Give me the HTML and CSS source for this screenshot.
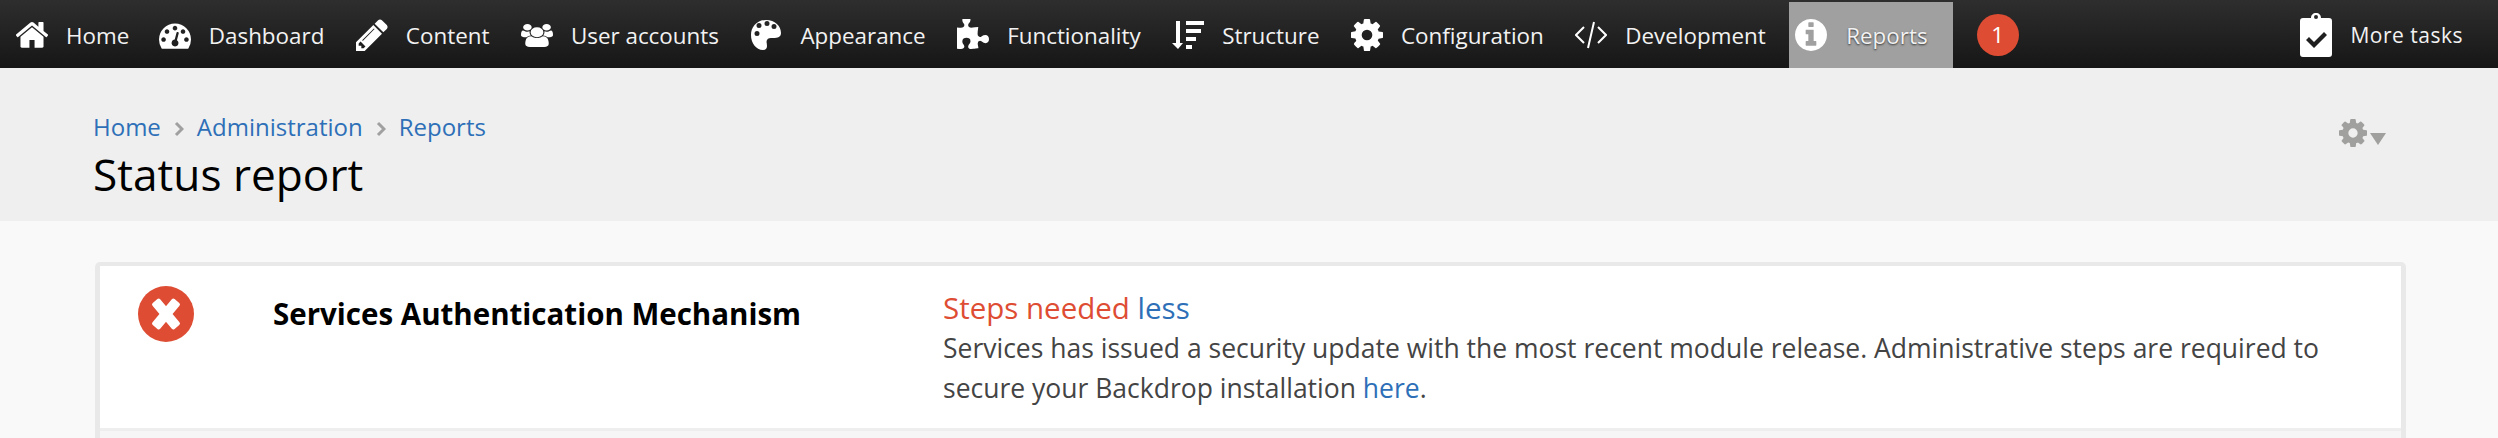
FILE: index.html
```html
<!DOCTYPE html>
<html lang="en">
<head>
    <meta charset="UTF-8">
    <meta name="viewport" content="width=device-width, initial-scale=1.0">
    <title>Status report</title>
    <link rel="stylesheet" href="styles.css">
</head>
<body>
    <!-- Admin Toolbar -->
    <nav class="toolbar">
        <a class="tool" href="#">
            <svg class="tool-icon" viewBox="96 200 1600 1400"><path d="M1472 992v480q0 26-19 45t-45 19h-384v-384h-256v384h-384q-26 0-45-19t-19-45v-480q0-1 .5-3t.5-3l575-474 575 474q1 2 1 6zm223-69l-62 74q-8 9-21 11h-3q-13 0-21-7l-692-577-692 577q-12 8-24 7-13-2-21-11l-62-74q-8-10-7-23.500t11-21.500l719-599q32-26 76-26t76 26l244 204v-195q0-14 9-23t23-9h192q14 0 23 9t9 23v408l219 182q10 8 11 21.500t-7 23.500z"/></svg>
            <span>Home</span>
        </a>
        <a class="tool" href="#">
            <svg class="tool-icon" viewBox="0 0 1792 1792"><path d="M384 1152q0-53-37.500-90.500t-90.500-37.500-90.500 37.500-37.500 90.500 37.500 90.500 90.500 37.500 90.500-37.500 37.500-90.500zm192-448q0-53-37.500-90.500t-90.500-37.500-90.500 37.500-37.500 90.500 37.500 90.500 90.500 37.500 90.500-37.500 37.500-90.500zm428 481l101-382q6-26-7.500-48.500t-38.500-29.500-48 6.500-30 39.500l-101 382q-60 5-107 43.500t-63 98.500q-20 77 20 146t117 89 146-20 89-117q16-60-6-117t-72-91zm660-33q0-53-37.500-90.500t-90.500-37.500-90.500 37.500-37.500 90.500 37.500 90.500 90.500 37.500 90.500-37.500 37.500-90.500zm-640-640q0-53-37.500-90.500t-90.500-37.500-90.500 37.500-37.500 90.500 37.500 90.500 90.500 37.500 90.500-37.500 37.500-90.500zm448 192q0-53-37.500-90.500t-90.500-37.500-90.500 37.500-37.500 90.500 37.500 90.500 90.500 37.500 90.500-37.500 37.500-90.500zm320 448q0 261-141 483-19 29-54 29h-1402q-35 0-54-29-141-221-141-483 0-182 71-348t191-286 286-191 348-71 348 71 286 191 191 286 71 348z"/></svg>
            <span>Dashboard</span>
        </a>
        <a class="tool" href="#">
            <svg class="tool-icon" viewBox="128 128 1536 1536"><path d="M491 1536l91-91-235-235-91 91v107h128v128h107zm523-928q0-22-22-22-10 0-17 7l-542 542q-7 7-7 17 0 22 22 22 10 0 17-7l542-542q7-7 7-17zm-54-192l416 416-832 832h-416v-416zm683 96q0 53-37 90l-166 166-416-416 166-165q36-38 90-38 53 0 91 38l235 234q37 39 37 91z"/></svg>
            <span>Content</span>
        </a>
        <a class="tool" href="#">
            <svg class="tool-icon users-icon" viewBox="0 0 1920 1792" preserveAspectRatio="none"><path d="M593 896q-162 5-265 128h-134q-82 0-138-40.500t-56-118.500q0-353 124-353 6 0 43.500 21t97.500 42.500 119 21.500q67 0 133-23-5 37-5 66 0 139 81 256zm1071 637q0 120-73 189.500t-194 69.500h-874q-121 0-194-69.500t-73-189.500q0-53 3.500-103.500t14-109 26.500-108.500 43-97.500 62-81 85.500-53.500 111.500-20q10 0 43 21.500t73 48 107 48 135 21.500 135-21.500 107-48 73-48 43-21.500q61 0 111.500 20t85.500 53.500 62 81 43 97.500 26.500 108.500 14 109 3.500 103.500zm-1024-1277q0 106-75 181t-181 75-181-75-75-181 75-181 181-75 181 75 75 181zm704 384q0 159-112.500 271.500t-271.500 112.500-271.500-112.500-112.500-271.500 112.500-271.500 271.500-112.500 271.500 112.500 112.500 271.500zm576 225q0 78-56 118.500t-138 40.500h-134q-103-123-265-128 81-117 81-256 0-29-5-66 66 23 133 23 59 0 119-21.500t97.500-42.500 43.500-21q124 0 124 353zm-128-609q0 106-75 181t-181 75-181-75-75-181 75-181 181-75 181 75 75 181z"/></svg>
            <span>User accounts</span>
        </a>
        <a class="tool" href="#">
            <svg class="tool-icon" viewBox="0 0 32 32"><path fill-rule="evenodd" d="M16 1C7 1 1 8 1 16c0 8 5 15 12 15 3 0 4-2 4-4 0-3-1-4 0-6 1-2 3-2 6-2 5 0 8-1 8-5C31 7 25 1 16 1zM7 17a2.500 2.500 0 1 1 0-5 2.500 2.500 0 0 1 0 5zm2-8a2.500 2.500 0 1 1 0-5 2.500 2.500 0 0 1 0 5zm8-2a2.500 2.500 0 1 1 0-5 2.500 2.500 0 0 1 0 5zm7 3a2.500 2.500 0 1 1 0-5 2.500 2.500 0 0 1 0 5z"/></svg>
            <span>Appearance</span>
        </a>
        <a class="tool" href="#">
            <svg class="tool-icon" viewBox="128 128 1536 1536"><path d="M1664 1098q0 81-44.500 135t-123.500 54q-41 0-77.500-17.500t-59-38-56.500-38-71-17.500q-110 0-110 124 0 39 16 115t15 115v5q-22 0-33 1-34 3-97.500 11.500t-115.500 13.500-98 5q-61 0-103-26.500t-42-83.500q0-37 17.500-71t38-56.500 38-59 17.500-77.500q0-79-54-123.500t-135-44.500q-84 0-143 45.500t-59 127.500q0 43 15 83t33.500 64.500 33.500 53 15 50.500q0 45-46 89-37 35-117 35-95 0-245-24-9-2-27.500-4t-27.500-4l-13-2q-1 0-3-1-2 0-2-1v-1024q2 1 17.500 3.500t34 5 21.500 3.500q150 24 245 24 80 0 117-35 46-44 46-89 0-22-15-50.500t-33.500-53-33.500-64.500-15-83q0-82 59-127.500t144-45.500q80 0 134 44.500t54 123.500q0 41-17.500 77.500t-38 59-38 56.500-17.500 71q0 57 42 83.500t103 26.500q64 0 180-15t163-17v2q-1 2-3.500 17.500t-5 34-3.500 21.500q-24 150-24 245 0 80 35 117 44 46 89 46 22 0 50.500-15t53-33.500 64.500-33.500 83-15q82 0 127.500 59t45.500 143z"/></svg>
            <span>Functionality</span>
        </a>
        <a class="tool" href="#">
            <svg class="tool-icon" viewBox="0 -2 32 32"><path d="M4 0h4v22h3l-5 6-6-6h4zM14 0h18v4H14zM14 8h15v4H14zM14 16h10v4H14zM14 24h6v4h-6z"/></svg>
            <span>Structure</span>
        </a>
        <a class="tool" href="#">
            <svg class="tool-icon" viewBox="128 128 1536 1536"><path d="M1152 896q0-106-75-181t-181-75-181 75-75 181 75 181 181 75 181-75 75-181zm512-109v222q0 12-8 23t-20 13l-185 28q-19 54-39 91 35 50 107 138 10 12 10 25t-9 23q-27 37-99 108t-94 71q-12 0-26-9l-138-108q-44 23-91 38-16 136-29 186-7 28-36 28h-222q-14 0-24.500-8.500t-11.500-21.500l-28-184q-49-16-90-37l-141 107q-10 9-25 9-14 0-25-11-126-114-165-168-7-10-7-23 0-12 8-23 15-21 51-66.500t54-70.500q-27-50-41-99l-183-27q-13-2-21-12.500t-8-23.500v-222q0-12 8-23t19-13l186-28q14-46 39-92-40-57-107-138-10-12-10-24 0-10 9-23 26-36 98.500-107.500t94.500-71.500q13 0 26 10l138 107q44-23 91-38 16-136 29-186 7-28 36-28h222q14 0 24.500 8.500t11.500 21.500l28 184q49 16 90 37l142-107q9-9 24-9 13 0 25 10 129 119 165 170 7 8 7 22 0 12-8 23-15 21-51 66.500t-54 70.500q26 50 41 98l183 28q13 2 21 12.500t8 23.500z"/></svg>
            <span>Configuration</span>
        </a>
        <a class="tool" href="#">
            <svg class="tool-icon code-icon" viewBox="0 0 32 32"><path d="M9 8l-8 8 8 8M23 8l8 8-8 8M19 3l-6 26"/></svg>
            <span>Development</span>
        </a>
        <a class="tool active" href="#">
            <svg class="tool-icon" viewBox="128 128 1536 1536"><path d="M1152 1376v-160q0-14-9-23t-23-9h-96v-512q0-14-9-23t-23-9h-320q-14 0-23 9t-9 23v160q0 14 9 23t23 9h96v320h-96q-14 0-23 9t-9 23v160q0 14 9 23t23 9h448q14 0 23-9t9-23zm-128-896v-160q0-14-9-23t-23-9h-192q-14 0-23 9t-9 23v160q0 14 9 23t23 9h192q14 0 23-9t9-23zm640 416q0 209-103 385.500t-279.500 279.500-385.500 103-385.500-103-279.500-279.500-103-385.500 103-385.500 279.500-279.500 385.500-103 385.500 103 279.500 279.500 103 385.500z"/></svg>
            <span>Reports</span>
        </a>
        <span class="badge">1</span>
        <a class="tool more-tasks" href="#">
            <svg class="tool-icon clip-icon" viewBox="0 0 32 44"><path fill-rule="evenodd" d="M3 5h8c0-3 2-5 5-5s5 2 5 5h8c2 0 3 1 3 3v33c0 2-1 3-3 3H3c-2 0-3-1-3-3V8c0-2 1-3 3-3zm13-3a2 2 0 1 0 0 4 2 2 0 0 0 0-4zM6 27l3-3 5 5 10-10 3 3-13 13z"/></svg>
            <span>More tasks</span>
        </a>
    </nav>

    <!-- Page Header -->
    <header class="page-header">
        <div>
            <div class="breadcrumb">
                <a href="#">Home</a>
                <svg class="crumb-sep" viewBox="0 0 10 16"><path d="M2 2l6 6-6 6"/></svg>
                <a href="#">Administration</a>
                <svg class="crumb-sep" viewBox="0 0 10 16"><path d="M2 2l6 6-6 6"/></svg>
                <a href="#">Reports</a>
            </div>
            <h1>Status report</h1>
        </div>
        <div class="page-gear">
            <svg class="gear-icon" viewBox="128 128 1536 1536"><path d="M1152 896q0-106-75-181t-181-75-181 75-75 181 75 181 181 75 181-75 75-181zm512-109v222q0 12-8 23t-20 13l-185 28q-19 54-39 91 35 50 107 138 10 12 10 25t-9 23q-27 37-99 108t-94 71q-12 0-26-9l-138-108q-44 23-91 38-16 136-29 186-7 28-36 28h-222q-14 0-24.500-8.500t-11.500-21.500l-28-184q-49-16-90-37l-141 107q-10 9-25 9-14 0-25-11-126-114-165-168-7-10-7-23 0-12 8-23 15-21 51-66.500t54-70.500q-27-50-41-99l-183-27q-13-2-21-12.500t-8-23.500v-222q0-12 8-23t19-13l186-28q14-46 39-92-40-57-107-138-10-12-10-24 0-10 9-23 26-36 98.500-107.500t94.500-71.500q13 0 26 10l138 107q44-23 91-38 16-136 29-186 7-28 36-28h222q14 0 24.500 8.500t11.500 21.500l28 184q49 16 90 37l142-107q9-9 24-9 13 0 25 10 129 119 165 170 7 8 7 22 0 12-8 23-15 21-51 66.500t-54 70.500q26 50 41 98l183 28q13 2 21 12.500t8 23.500z"/></svg>
            <span class="gear-caret"></span>
        </div>
    </header>

    <!-- Status Table -->
    <main class="content">
        <div class="status-card">
            <div class="status-row">
                <svg class="error-icon" viewBox="0 0 56 56">
                    <circle cx="28" cy="28" r="28"/>
                    <rect x="23" y="11" width="10" height="34" rx="2" transform="rotate(-40 28 28)"/>
                    <rect x="23" y="11" width="10" height="34" rx="2" transform="rotate(40 28 28)"/>
                </svg>
                <div class="status-title">Services Authentication Mechanism</div>
                <div class="status-value">
                    <div class="status-head"><span class="status-error">Steps needed</span> <a href="#">less</a></div>
                    <p>Services has issued a security update with the most recent module release. Administrative steps are required to secure your Backdrop installation <a href="#">here</a>.</p>
                </div>
            </div>
            <div class="status-row-next"></div>
        </div>
    </main>
</body>
</html>
```

FILE: styles.css
```css
html, body {
    height: 100%;
}

body {
    margin: 0;
    font-family: "Open Sans", sans-serif;
    background-color: #f9f9f9;
    overflow: hidden;
}

a {
    color: #2e70b8;
    text-decoration: none;
}

/* Admin Toolbar */
.toolbar {
    display: flex;
    align-items: stretch;
    height: 66px;
    padding-top: 2px;
    background: linear-gradient(#2e2e2e, #161616);
    font-size: 22.4px;
}

.tool {
    display: flex;
    align-items: center;
    gap: 18px;
    padding: 0 15.5px 0 16px;
    color: #f2f2f2;
}

.tool:first-child {
    padding-right: 13.5px;
}

.tool-icon {
    width: 32px;
    height: 32px;
    fill: #fff;
    flex-shrink: 0;
}

.users-icon {
    height: 23px;
}

.code-icon {
    fill: none;
    stroke: #fff;
    stroke-width: 2;
}

.clip-icon {
    height: 44px;
}

.tool.active {
    gap: 19px;
    margin-left: 8px;
    padding: 0 25px 0 6px;
    background-color: #a0a0a0;
    text-shadow: 0 1px 2px #333;
}

.badge {
    align-self: center;
    width: 42px;
    height: 42px;
    margin-left: 24px;
    border-radius: 50%;
    background-color: #de4d33;
    color: #fff;
    line-height: 42px;
    text-align: center;
}

.more-tasks {
    margin-left: auto;
    padding-right: 35px;
    font-size: 21px;
    letter-spacing: 0.5px;
}

/* Page Header */
.page-header {
    display: flex;
    justify-content: space-between;
    height: 153px;
    padding-left: 93px;
    padding-right: 112px;
    background-color: #efefef;
}

.breadcrumb {
    display: flex;
    align-items: center;
    gap: 13px;
    margin-top: 43px;
    font-size: 24px;
    line-height: 32px;
}

.crumb-sep {
    width: 10px;
    height: 16px;
    margin-top: 4px;
    fill: none;
    stroke: #a0a0a0;
    stroke-width: 3;
}

h1 {
    margin: 2px 0 0;
    font-size: 44.2px;
    font-weight: 400;
    line-height: 58px;
    color: #000;
}

.page-gear {
    display: flex;
    align-items: flex-end;
    gap: 3px;
    height: 30px;
    margin-top: 49px;
    filter: blur(0.5px);
}

.gear-icon {
    width: 28px;
    height: 28px;
    fill: #a0a09e;
}

.gear-caret {
    width: 0;
    height: 0;
    margin-bottom: 2px;
    border-left: 8px solid transparent;
    border-right: 8px solid transparent;
    border-top: 12px solid #a0a09e;
}

/* Status Table */
.content {
    padding: 41px 92px 0 95px;
}

.status-card {
    border: solid #e9e9e9;
    border-width: 4px 5px 0;
    border-radius: 5px 5px 0 0;
    background-color: #f6f6f6;
}

.status-row {
    display: flex;
    align-items: flex-start;
    height: 162px;
    background-color: #fff;
    border-bottom: 3px solid #eeeeee;
}

.error-icon {
    width: 56px;
    height: 56px;
    margin: 20px 0 0 38px;
    flex-shrink: 0;
}

.error-icon circle {
    fill: #de4d33;
}

.error-icon rect {
    fill: #fff;
}

.status-title {
    width: 670px;
    margin: 28px 0 0 79px;
    font-size: 29.5px;
    font-weight: 700;
    line-height: 40px;
    color: #000;
}

.status-value {
    width: 1400px;
    margin-top: 22px;
    font-size: 26.5px;
    line-height: 40px;
    color: #444;
}

.status-head {
    font-size: 29.5px;
}

.status-error {
    color: #de4d33;
}

.status-value p {
    margin: 0;
}

.status-row-next {
    height: 20px;
}
```
